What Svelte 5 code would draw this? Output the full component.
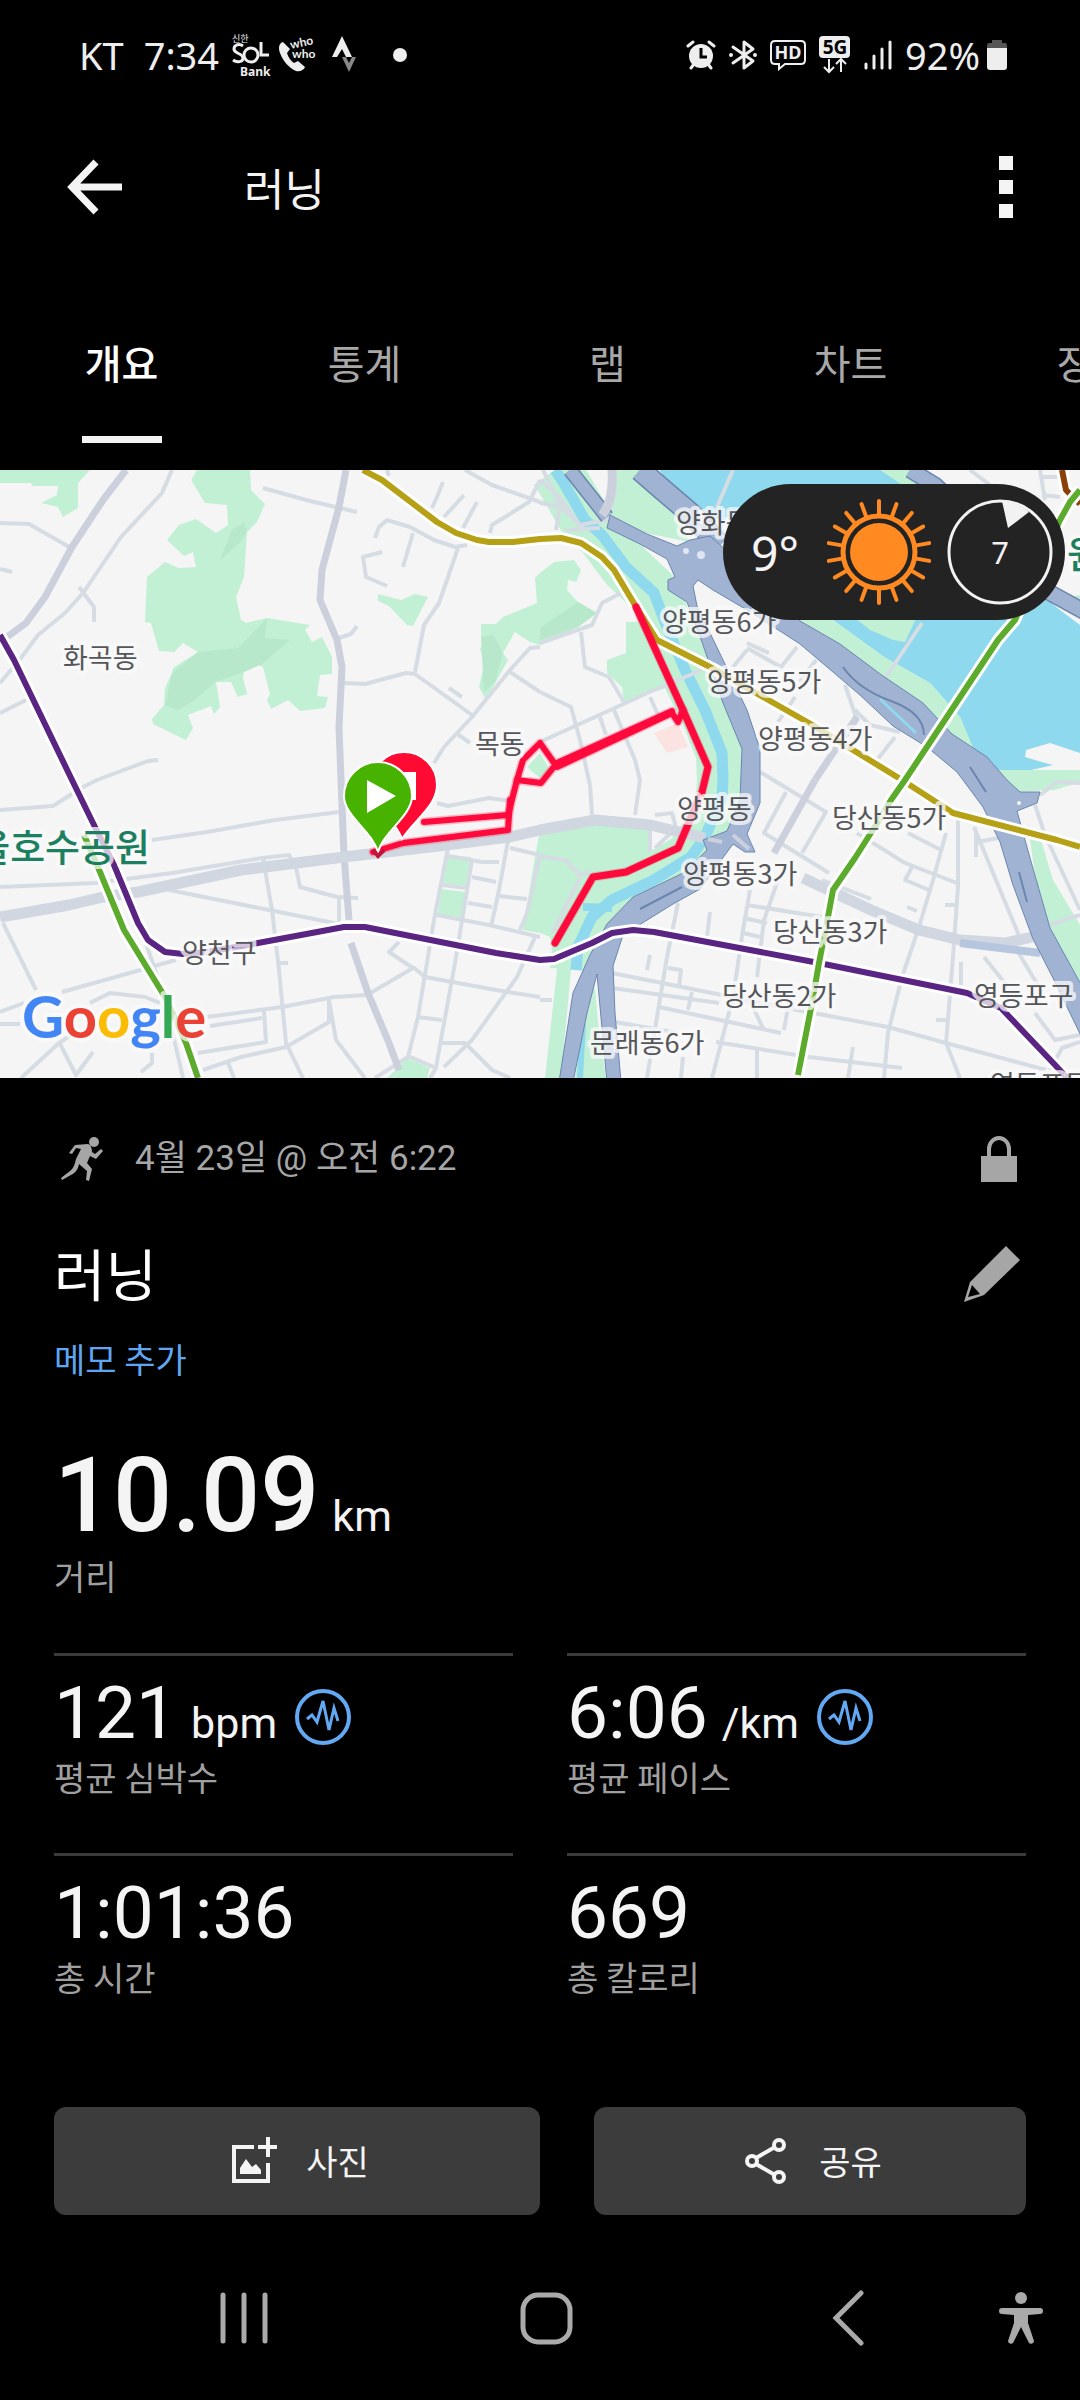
<script>
  const tabs = ['개요', '통계', '랩', '차트', '장비'];
  let active = $state(0);

  const stats = [
    { value: '121', unit: 'bpm', label: '평균 심박수', zone: true },
    { value: '6:06', unit: '/km', label: '평균 페이스', zone: true },
    { value: '1:01:36', unit: '', label: '총 시간', zone: false },
    { value: '669', unit: '', label: '총 칼로리', zone: false }
  ];

  const rays = Array.from({ length: 18 }, (_, i) => i * 20);

  const water = [
    '659,0 888,0 910,20 1060,140 1080,155 1080,283 1050,273 1026,280 1025,287 1045,293 1053,295 1018,303 1000,303 975,283 960,247 930,213 884,187 833,150 800,120 720,50 690,40'
  ];

  const parks = [
    '0,0 90,0 78,13 78,38 63,47 58,37 41,33 57,25 58,16 33,16 31,13 0,13',
    '197,0 250,0 251,20 265,34 257,52 247,62 244,107 236,127 241,150 246,153 267,148 310,155 305,160 312,172 322,167 332,187 332,204 320,205 317,226 328,227 325,238 300,241 288,230 271,239 267,230 270,224 263,197 258,195 244,202 243,208 247,224 238,227 231,212 216,212 220,237 214,244 211,236 188,245 193,258 186,270 153,254 152,249 164,235 165,218 172,203 173,198 198,182 183,173 174,182 159,181 151,153 145,152 147,107 165,92 179,98 196,97 193,82 184,86 167,70 179,55 196,49 216,63 228,55 227,35 205,33 191,10',
    '378,124 401,130 415,124 428,127 413,156 407,155 389,136 378,131',
    '540,103 535,108 537,133 503,147 496,154 481,154 481,167 486,172 480,178 484,195 479,217 486,230 508,190 503,183 515,162 530,172 540,175 578,157 597,143 578,132 567,120 568,110 576,112 581,100 574,90 554,92',
    '626,152 640,152 655,185 669,217 624,232 622,217 607,203 607,190 626,183',
    '540,360 595,352 649,357 650,380 678,378 692,370 682,397 626,423 588,427 574,463 571,500 561,608 545,608 557,500 550,467 540,463 523,460 535,387',
    '595,517 598,553 606,608 575,608 586,533',
    '448,385 471,387 467,416 443,413',
    '441,419 465,422 462,449 438,446',
    '408,588 430,598 427,608 387,608',
    '527,297 540,283 550,300 540,308',
    '616,0 640,0 675,40 690,72 630,60 612,40',
    '790,140 833,150 884,187 930,213 960,247 975,283 1000,303 1018,325 980,320 880,240',
    '998,300 1080,300 1080,312 1055,320 1012,322',
    '1028,355 1041,370 1053,410 1080,455 1080,520 1052,465 1035,405',
    '845,140 920,140 905,172 893,170 870,160',
    '880,0 910,0 935,20 910,20',
    '1050,130 1080,125 1080,140'
  ];

  const hills = [
    '198,182 238,178 267,148 265,168 290,170 262,194 244,202 215,212 195,230 178,240 165,235 172,203',
    '247,62 244,52 232,60 220,90 240,72',
    '597,143 578,132 540,158 540,170 578,157',
    '481,167 493,165 503,183 495,212 484,222'
  ];

  const arterials = [
    '126,0 103,30 72,77 45,127 26,153 7,167',
    '346,0 339,37 322,100 320,130 337,170 342,197 339,257 341,310 344,385 349,450',
    '351,473 368,523 389,573 399,600',
    '815,310 857,247',
    '774,383 815,310'
  ];

  const boulevards = [
    '0,447 69,435 103,427 138,422 241,400 344,387 430,377 510,367 540,360 595,350 650,355 705,368',
    '803,408 871,440 919,460 960,470 1005,473 1032,467'
  ];

  const streets = [
    '172,0 162,23 121,67 83,123 65,143 38,165 21,188 0,213',
    '0,53 29,54 71,78', '0,99 12,102', '79,117 94,137 94,152', '0,243 26,230',
    '263,18 310,31 357,42', '387,0 389,6', '465,0 492,15 540,32 557,37',
    '540,10 529,32 492,55 490,63', '443,12 437,27 432,38', '464,25 444,47', '477,32 463,58',
    '375,68 379,57 387,50 410,57 434,70 455,77 467,75', '413,63 403,97',
    '382,82 363,87 366,107 387,116', '458,78 439,133 424,155 415,202',
    '344,213 365,214 406,203 415,204 472,245', '339,168 351,164 357,156',
    '540,177 530,178 510,200 472,247 444,277 434,293', '510,202 540,222', '449,218 462,227',
    '456,263 470,273', '158,290 148,291 97,310 83,317 53,336 0,340',
    '339,342 275,350 207,362 152,370',
    '0,417 96,413 172,403 262,388 289,385 296,397 300,417 337,427 358,428',
    '263,388 272,440 279,500 286,573 303,608', '339,427 339,452', '169,420 269,440 344,455',
    '3,453 36,520', '145,470 165,530 183,608', '62,522 176,490', '279,493 288,493',
    '0,542 24,533', '0,554 20,554', '90,533 110,523 145,527 160,533',
    '207,547 282,537 334,527 367,525 413,498', '413,498 389,482 399,472',
    '413,497 425,507 496,520 540,527', '210,556 262,548', '264,541 266,572 198,583',
    '203,600 241,587 286,577 329,552 329,530 336,570 365,608', '227,590 234,608',
    '21,608 59,573 74,563', '59,572 76,605 93,582', '152,583 152,593 141,602',
    '448,378 434,450 418,547 408,587 375,608', '472,390 455,493 436,597',
    '510,360 499,420 491,457', '510,378 540,385', '448,386 482,392 499,392',
    '442,415 468,418', '472,407 496,412', '468,433 492,437', '499,426 527,429',
    '437,445 489,455 540,467', '540,385 527,443 520,460', '535,467 517,507 472,570 444,597',
    '442,573 465,573 492,600 510,608', '417,547 442,550', '408,586 436,598 430,608',
    '437,333 448,336 489,328 510,331',
    '540,173 592,155 602,133 623,122', '581,162 585,197 609,207 624,232',
    '540,272 595,247 654,220 702,200', '540,222 571,237 580,270 590,315 592,345',
    '600,247 606,265', '614,240 635,290 640,310 635,345', '650,227 659,247',
    '543,0 560,35 556,60', '540,33 560,36 580,55 607,50 615,20 610,0', '565,60 600,58',
    '540,10 560,28 583,60', '747,173 769,183', '747,178 781,197 797,177', '747,180 733,197',
    '795,227 778,252', '816,190 800,212', '895,267 877,290', '733,0 717,37', '922,153 884,210',
    '855,240 870,255 900,262', '845,215 857,250 850,262',
    '760,302 826,342 802,383', '786,322 764,363 829,403', '822,410 871,429',
    '857,363 905,393 957,413', '908,363 941,380',
    '946,363 933,410 919,457 902,507 888,563 884,608',
    '958,350 958,417 953,487 946,573 960,608', '912,397 905,410 929,420',
    '747,435 822,447', '750,420 743,460 733,527 712,608', '778,410 764,450 757,507',
    '748,527 764,560', '743,448 767,453', '743,463 760,467',
    '678,433 667,487 657,547 647,608', '710,442 707,467', '650,485 647,500', '668,498 681,500 679,517',
    '612,503 712,523 760,533 888,557 946,573 1046,600', '612,518 719,533', '659,537 781,563',
    '716,572 809,587 902,598', '615,552 678,563', '692,522 688,540', '757,577 757,608',
    '853,577 848,608', '788,537 784,560', '683,587 681,608', '974,357 1022,473', '976,363 976,387',
    '977,372 998,368', '984,487 1008,517', '1015,477 1039,517', '961,492 961,515', '936,550 950,550',
    '907,437 917,441', '945,435 957,435', '1080,445 1050,455', '1080,313 1057,312 1040,325',
    '1035,335 1045,365 1080,440', '970,0 990,15', '1040,0 1045,30', '1042,7 1058,7', '1042,25 1060,27',
    '1035,543 1055,570 1080,565', '1050,600 1062,578 1080,572', '655,345 672,343 676,358 655,378',
    '650,357 650,382', '540,386 565,390 580,405 590,402', '540,530 552,530', '580,408 553,462'
  ];

  const ramps = [
    { pts: '570,0 596,33 607,47', w: 12 },
    { pts: '640,0 663,20 690,43 720,75', w: 20 },
    { pts: '910,0 935,15 1045,120 1085,142', w: 14 }
  ];

  const expressway =
    '610,45 647,64 677,76 690,70 710,66 760,110 800,151 840,174 883,206 923,233 952,264 987,287 1007,310 1020,322 1040,322 1037,333 1017,341 1030,388 1040,423 1050,458 1084,520 1084,572 1053,508 1033,469 1013,415 1000,372 983,337 957,302 927,277 893,256 860,225 833,202 800,174 780,161 747,140 713,120 698,110 693,116 697,136 723,190 747,240 760,279 760,333 747,364 755,382 745,382 733,374 700,419 673,434 623,465 613,496 615,543 621,612 607,612 597,504 587,543 573,612 559,612 573,523 590,485 607,454 633,427 683,403 707,380 703,370 727,361 740,330 742,279 723,233 703,175 687,132 668,120 668,110 675,107 667,89 640,74 607,58';

  const stream =
    '555,0 562,10 585,50 602,65 626,97 654,123 667,157 685,200 705,240 722,283 723,310 722,327 705,367 691,387 654,410 612,430 592,447 578,477 576,500';

  const lines = [
    { color: '#8a4109', pts: '1062,0 1066,20 1080,34' },
    { color: '#b5a016', pts: '363,0 382,10 437,52 456,63 477,70 489,72 513,72 540,69 561,68 581,73 602,87 614,100 635,135 657,170 712,198 809,253 902,310 936,332 953,343 1057,370 1080,377' },
    { color: '#5dab2c', pts: '84,365 100,402 124,460 165,527 186,573 198,608' },
    { color: '#5a2582', pts: '0,165 14,190 72,310 93,353 114,395 138,453 148,470 165,482 183,484 207,482 258,473 344,457 365,457 496,483 540,490 554,489 592,473 612,463 633,460 654,462 819,493 967,523 1001,538 1057,597 1067,608' },
    { color: '#5dab2c', pts: '1080,20 1070,32 1060,50 1015,150 998,170 905,310 891,330 876,355 855,388 833,420 828,447 819,493 812,533 798,605' }
  ];

  const route = [
    '636,137 683,240 708,297 702,322 678,378 626,402 593,407 555,473',
    '683,240 678,252 672,243 557,297 540,273 523,290 517,310 541,313 557,293 672,241',
    '517,310 508,345 424,352',
    '510,330 508,360 403,373 373,382'
  ];

  const places = [
    { name: '화곡동', x: 63, y: 198 },
    { name: '목동', x: 475, y: 284 },
    { name: '양화동', x: 676, y: 63 },
    { name: '양평동6가', x: 662, y: 162 },
    { name: '양평동5가', x: 707, y: 222 },
    { name: '양평동4가', x: 758, y: 279 },
    { name: '양평동', x: 677, y: 349 },
    { name: '당산동5가', x: 832, y: 358 },
    { name: '양평동3가', x: 683, y: 414 },
    { name: '당산동3가', x: 773, y: 472 },
    { name: '당산동2가', x: 722, y: 536 },
    { name: '영등포구', x: 974, y: 536 },
    { name: '문래동6가', x: 590, y: 583 },
    { name: '영등포동', x: 990, y: 625 },
    { name: '양천구', x: 182, y: 493 }
  ];
</script>

<div class="screen">
  <div class="status">
    <div class="group">
      <span>KT</span>
      <span>7:34</span>
      <svg class="app-icon" width="42" height="48" viewBox="0 0 42 48">
        <text class="tiny ko" x="1" y="11">신한</text>
        <g fill="none" stroke="#eee" stroke-width="3">
          <path d="M12 15C8 12 3 14 3 18c0 5 9 4 9 9 0 4-6 5-10 2" />
          <circle cx="20" cy="24" r="7" />
          <path d="M30 11v13h8" />
        </g>
        <text class="tiny bold" x="9" y="45">Bank</text>
      </svg>
      <svg width="42" height="42" viewBox="0 0 42 42">
        <path d="M6 8c-4 1-5 6-3 11 3 8 9 15 16 18 4 1 8-1 9-4l-7-6-4 2c-3-2-6-6-7-10l3-4z" fill="#eee" />
        <text class="tiny who" x="14" y="15" transform="rotate(-12 14 15)">who</text>
        <text class="tiny who" x="15" y="24">who</text>
      </svg>
      <svg width="28" height="38" viewBox="0 0 28 38">
        <path d="M11 0l10 21h-6l-4-8-5 8H1z" fill="#eee" />
        <path d="M11 21h4l3 6 3-6h4l-7 15z" fill="#888" />
      </svg>
      <span class="dot"></span>
    </div>
    <div class="group right">
      <svg width="30" height="30" viewBox="0 0 30 30">
        <circle cx="15" cy="16" r="12" fill="#eee" />
        <path d="M2 6l5-4M28 6l-5-4M5 28l3-4M25 28l-3-4" stroke="#eee" stroke-width="3" stroke-linecap="round" />
        <path d="M15 8v9h6" fill="none" stroke="#000" stroke-width="3" />
      </svg>
      <svg width="28" height="32" viewBox="0 0 28 32">
        <path d="M4 8l20 14-9 7V3l9 7L4 24" fill="none" stroke="#eee" stroke-width="3" stroke-linejoin="round" stroke-linecap="round" />
        <circle cx="2" cy="16" r="2" fill="#eee" /><circle cx="26" cy="16" r="2" fill="#eee" />
      </svg>
      <svg width="36" height="32" viewBox="0 0 36 32">
        <path d="M5 2h26q4 0 4 4v15q0 4-4 4H15l-6 5v-5H5q-4 0-4-4V6q0-4 4-4z" fill="none" stroke="#eee" stroke-width="2" />
        <text class="hd" x="18" y="20" text-anchor="middle">HD</text>
      </svg>
      <svg width="32" height="38" viewBox="0 0 32 38">
        <rect width="31" height="22" rx="4" fill="#eee" />
        <text class="five" x="16" y="18" text-anchor="middle">5G</text>
        <path d="M10 23v12M5 31l5 5 5-5M22 36V24M17 28l5-5 5 5" fill="none" stroke="#eee" stroke-width="2" />
      </svg>
      <svg width="28" height="30" viewBox="0 0 28 30">
        <path d="M2 28v-4M10 28V16M18 28V9M26 28V2" stroke="#eee" stroke-width="3" stroke-linecap="round" />
      </svg>
      <span class="battery">
        92%
        <svg width="22" height="32" viewBox="0 0 22 32">
          <path d="M6 1h10v3h3q2 0 2 3v3H1V7q0-3 2-3h3z" fill="#555" />
          <path d="M1 9h20v19q0 3-3 3H4q-3 0-3-3z" fill="#eee" />
        </svg>
      </span>
    </div>
  </div>

  <header>
    <button class="icon" aria-label="뒤로">
      <svg width="56" height="56" viewBox="0 0 56 56">
        <path d="M29 3L5 28l24 25M6 28h49" fill="none" stroke="#f4f4f4" stroke-width="7" />
      </svg>
    </button>
    <h1>러닝</h1>
    <button class="icon" aria-label="더보기">
      <svg width="14" height="62" viewBox="0 0 14 62">
        <path d="M0 0h14v14H0zM0 24h14v14H0zM0 48h14v14H0z" fill="#f4f4f4" />
      </svg>
    </button>
  </header>

  <nav class="tabs">
    {#each tabs as tab, i}
      <button class:active={active === i} onclick={() => (active = i)}>{tab}</button>
    {/each}
  </nav>

  <section class="map">
    <svg class="canvas" viewBox="0 0 1080 608">
      <rect width="1080" height="608" fill="#f5f5f5" />
      {#each water as pts}<polygon points={pts} fill="#8ed9ed" />{/each}
      <polyline class="bank" points={stream} />
      {#each parks as pts}<polygon points={pts} fill="#c1f0d5" />{/each}
      {#each hills as pts}<polygon points={pts} fill="#b8e8cc" />{/each}
      <polygon points="693,112 747,140 800,174 833,202 860,225 893,256 900,290 765,290 747,240 723,190" fill="#f5f5f5" />
      <polygon points="760,333 747,364 755,390 700,425 625,468 613,500 617,560 780,560 780,333" fill="#f5f5f5" />
      <polygon points="654,263 678,253 688,277 667,283" fill="#fbe3e1" />
      <polyline points={stream} fill="none" stroke="#8ed9ed" stroke-width="11" />
      <polyline points="583,553 580,608" fill="none" stroke="#8ed9ed" stroke-width="6" />
      <polyline points="583,437 612,438" fill="none" stroke="#8ed9ed" stroke-width="8" />
      {#each streets as pts}<polyline class="street" points={pts} />{/each}
      {#each arterials as pts}<polyline class="arterial" points={pts} />{/each}
      {#each boulevards as pts}<polyline class="boulevard" points={pts} />{/each}
      <polyline points="960,473 1040,483" stroke="#b6c6de" stroke-width="8" fill="none" />
      {#each ramps as r}
        <polyline class="joined" points={r.pts} stroke="#6b86ae" stroke-width={r.w + 3} />
        <polyline class="joined" points={r.pts} stroke="#a1b3d3" stroke-width={r.w} />
      {/each}
      <polygon class="expressway" points={expressway} />
      <path d="M843 197q15 22 48 34t33 34M640 439l42-22M970 297l16 25M1019 402l8 30" fill="none" stroke="#6b86ae" stroke-width="2" />
      <path d="M880 229l36 34" stroke="#8ed9ed" stroke-width="3" />
      <path d="M708 369l14 3M733 365l16 14" stroke="#cbd0dc" stroke-width="4" />
      <circle cx="686" cy="81" r="3" fill="#dfe6f2" /><circle cx="701" cy="85" r="4" fill="#dfe6f2" />
      <circle cx="1027" cy="347" r="3" fill="#f5f5f5" /><circle cx="1019" cy="333" r="2" fill="#f5f5f5" />
      <path d="M612 0q2 30-10 45" fill="none" stroke="#cbd0dc" stroke-width="9" />

      {#each lines as l}
        <polyline class="joined" points={l.pts} stroke="#fff" stroke-width="12" />
        <polyline class="joined" points={l.pts} stroke={l.color} stroke-width="6" />
      {/each}

      {#each route as pts}<polyline class="halo" points={pts} />{/each}
      {#each route.slice(0, 1) as pts}<polyline class="route wide" points={pts} />{/each}
      {#each route.slice(1) as pts}<polyline class="route" points={pts} />{/each}

      {#each places as p}<text class="place" x={p.x} y={p.y}>{p.name}</text>{/each}
      <text class="park-name" x="150" y="391" text-anchor="end">서서울호수공원</text>
      <text class="park-name" x="1067" y="98">원</text>

      <path d="M402 369C396 350 371 336 371 315a33 33 0 0 1 66 0c0 21-23 35-35 54z" fill="#ff0a32" stroke="#fff" stroke-width="2" />
      <rect x="390" y="302" width="26" height="28" fill="#fff" />
      <path d="M378 382C372 361 344 346 344 326a34 34 0 0 1 68 0c0 20-28 35-34 56z" fill="#47b300" stroke="#fff" stroke-width="2" />
      <path d="M367 310l29 16-29 17z" fill="#fff" />
      <path d="M373 380l5 6 6-6" fill="none" stroke="#c01538" stroke-width="4" />

      <text class="google" x="22" y="568"><tspan fill="#4285f4">G</tspan><tspan fill="#ea4335">o</tspan><tspan fill="#fbbc05">o</tspan><tspan fill="#4285f4">g</tspan><tspan fill="#34a853">l</tspan><tspan fill="#ea4335">e</tspan></text>
    </svg>

    <div class="weather">
      <span class="temp">9°</span>
      <svg width="104" height="106" viewBox="-52 -53 104 106">
        {#each rays as a}
          <path d="M0-38V-51" transform="rotate({a})" stroke="#ff8a22" stroke-width="4" stroke-linecap="round" />
        {/each}
        <circle r="36" fill="none" stroke="#ff8a22" stroke-width="5" />
        <circle r="29" fill="#ff8a22" />
      </svg>
      <div class="wind">
        <svg width="106" height="106" viewBox="-53 -53 106 106">
          <circle r="51" fill="none" stroke="#f2f2f2" stroke-width="3" />
          <path d="M2-51Q18-50 29-40L8-24z" fill="#f2f2f2" />
          <text class="speed" y="12" text-anchor="middle">7</text>
        </svg>
      </div>
    </div>
  </section>

  <main>
    <div class="row meta">
      <svg width="46" height="48" viewBox="0 0 46 48" fill="#a6a6a6">
        <circle cx="35" cy="7" r="5" />
        <path d="M16 10l13-1c3 1 4 4 4 8l3 2 6-5 2 2-7 8-6-3-3 7 5 6-3 12-3-1 1-9-8-7c-1 6-4 9-8 11L3 45l-1-2 9-7c4-3 5-8 6-12l5-10-5-1-4 6-3-1z" />
      </svg>
      <span class="date">4월 23일 @ 오전 6:22</span>
      <svg class="end" width="46" height="48" viewBox="0 0 46 48">
        <path d="M13 22V14a10 11 0 0 1 20 0v8" fill="none" stroke="#a6a6a6" stroke-width="4" />
        <rect x="5" y="21" width="36" height="26" fill="#a6a6a6" />
      </svg>
    </div>

    <div class="row title">
      <h2>러닝</h2>
      <button class="icon end" aria-label="제목 편집">
        <svg width="64" height="60" viewBox="0 0 64 60" fill="#a6a6a6">
          <path fill-rule="evenodd" d="M44 2L58 16 22 51 2 58 8 38zM10 41L6 53 18 50z" />
        </svg>
      </button>
    </div>

    <a class="memo" href="#memo">메모 추가</a>

    <div class="distance"><span class="big">10.09</span><span class="unit">km</span></div>
    <div class="label">거리</div>

    <div class="stats">
      {#each stats as s}
        <div class="stat">
          <div class="value">
            <span>{s.value}</span>
            {#if s.unit}<span class="unit">{s.unit}</span>{/if}
            {#if s.zone}
              <button class="icon zone" aria-label="{s.label} 차트">
                <svg width="58" height="58" viewBox="0 0 58 58" fill="none" stroke="#62a8f3">
                  <circle cx="29" cy="29" r="26" stroke-width="4" />
                  <path d="M13 31l5-4 5 7 6-21 6 29 5-22 4 13" stroke-width="3" />
                </svg>
              </button>
            {/if}
          </div>
          <div class="label">{s.label}</div>
        </div>
      {/each}
    </div>

    <div class="actions">
      <button>
        <svg width="48" height="48" viewBox="0 0 48 48">
          <path d="M24 10H4v34h34V26" fill="none" stroke="#f4f4f4" stroke-width="4" />
          <path d="M38 0v20M28 10h19" stroke="#f4f4f4" stroke-width="4" />
          <path d="M10 37V31l6-9 6 8 4-3 5 6v4z" fill="#f4f4f4" />
        </svg>
        사진
      </button>
      <button>
        <svg width="48" height="48" viewBox="0 0 48 48" fill="none" stroke="#f4f4f4" stroke-width="4">
          <circle cx="36" cy="8" r="5" /><circle cx="9" cy="24" r="5" /><circle cx="36" cy="40" r="5" />
          <path d="M13 21l19-11M13 27l19 11" />
        </svg>
        공유
      </button>
    </div>
  </main>

  <footer>
    <button class="icon" aria-label="최근 앱">
      <svg width="52" height="54" viewBox="0 0 52 54">
        <path d="M5 4v46M26 4v46M47 4v46" stroke="#aaa" stroke-width="5" stroke-linecap="round" />
      </svg>
    </button>
    <button class="icon" aria-label="홈">
      <svg width="54" height="54" viewBox="0 0 54 54">
        <rect x="4" y="4" width="47" height="47" rx="15" fill="none" stroke="#aaa" stroke-width="5" />
      </svg>
    </button>
    <button class="icon" aria-label="이전">
      <svg width="32" height="56" viewBox="0 0 32 56">
        <path d="M29 3L4 28l25 25" fill="none" stroke="#aaa" stroke-width="5" stroke-linecap="round" />
      </svg>
    </button>
    <button class="icon start" aria-label="접근성">
      <svg width="44" height="54" viewBox="0 0 44 54" fill="#aaa">
        <circle cx="22" cy="7" r="6" />
        <path d="M3 17h38a3 3 0 0 1 0 6l-12 1v8l6 18a3 3 0 0 1-5 2l-8-16-8 16a3 3 0 0 1-5-2l6-18v-8L3 23a3 3 0 0 1 0-6z" />
      </svg>
    </button>
  </footer>
</div>

<style>
  :global(body) {
    background: #000;
  }
  .screen {
    background: #000;
    color: #f4f4f4;
    font-family: Roboto, 'Noto Sans CJK KR', sans-serif;
    overflow: hidden;
  }
  svg {
    display: block;
    flex: none;
  }
  button {
    background: none;
    border: 0;
    padding: 0;
    color: inherit;
    font: inherit;
    cursor: pointer;
  }
  .icon {
    display: flex;
    align-items: center;
    justify-content: center;
  }
  .end {
    margin-left: auto;
  }

  .status {
    display: flex;
    justify-content: space-between;
    align-items: center;
    height: 109px;
    padding: 0 72px 0 79px;
    font-family: 'Noto Sans', sans-serif;
    font-size: 38px;
    color: #eee;
  }
  .group {
    display: flex;
    align-items: center;
    gap: 12px;
  }
  .group span:first-child {
    margin-right: 8px;
  }
  .right {
    gap: 13px;
  }
  .app-icon {
    margin-right: -8px;
  }
  .battery {
    display: flex;
    align-items: center;
    gap: 6px;
  }
  .dot {
    width: 14px;
    height: 14px;
    margin-left: 22px;
    border-radius: 50%;
    background: #eee;
  }
  .tiny {
    font-size: 12px;
    fill: #eee;
  }
  .ko {
    font-family: 'Noto Sans CJK KR', sans-serif;
    font-size: 9px;
  }
  .bold {
    font-weight: 700;
  }
  .who {
    font-family: Lato, sans-serif;
    font-weight: 700;
  }
  .hd {
    font-size: 18px;
    font-weight: 700;
    fill: #eee;
  }
  .five {
    font-size: 19px;
    font-weight: 700;
    fill: #000;
  }

  header {
    display: flex;
    align-items: center;
    height: 155px;
    padding: 0 67px;
  }
  header h1 {
    flex: 1;
    margin: 0 0 0 121px;
    font-family: 'Noto Sans CJK KR', sans-serif;
    font-size: 44px;
    font-weight: 400;
    line-height: 60px;
  }

  .tabs {
    display: grid;
    grid-auto-flow: column;
    grid-auto-columns: 22.5%;
    overflow: hidden;
    padding-bottom: 27px;
  }
  .tabs button {
    justify-self: center;
    min-width: 80px;
    padding: 70px 0 46px;
    border-bottom: 7px solid transparent;
    color: #a8a8a8;
    font-family: 'Noto Sans CJK KR', sans-serif;
    font-size: 40px;
    line-height: 56px;
  }
  .tabs .active {
    border-color: #f4f4f4;
    color: #fff;
    font-weight: 500;
  }

  .map {
    position: relative;
  }
  .canvas {
    width: 100%;
    height: auto;
  }
  .street {
    fill: none;
    stroke: #d6dce3;
    stroke-width: 4;
    stroke-linejoin: round;
  }
  .arterial {
    fill: none;
    stroke: #cbd0dc;
    stroke-width: 7;
    stroke-linejoin: round;
  }
  .boulevard {
    fill: none;
    stroke: #d0d7e0;
    stroke-width: 11;
    stroke-linejoin: round;
  }
  .expressway {
    fill: #a1b3d3;
    stroke: #6b86ae;
    stroke-width: 1px;
    stroke-linejoin: round;
  }
  .bank {
    fill: none;
    stroke: #c1f0d5;
    stroke-width: 52;
    stroke-linejoin: round;
  }
  .joined {
    fill: none;
    stroke-linejoin: round;
  }
  .halo {
    fill: none;
    stroke: #ff0a3c;
    stroke-opacity: 0.25;
    stroke-width: 9;
    stroke-linejoin: round;
    stroke-linecap: round;
  }
  .route {
    fill: none;
    stroke: #ff0a3c;
    stroke-width: 6;
    stroke-linejoin: round;
    stroke-linecap: round;
  }
  .wide {
    stroke-width: 7;
  }
  .place,
  .park-name,
  .google {
    font-family: 'Noto Sans CJK KR', sans-serif;
    font-size: 27px;
    fill: #55565a;
    stroke: rgba(250, 250, 250, 0.75);
    stroke-width: 8px;
    stroke-linejoin: round;
    paint-order: stroke;
  }
  .park-name {
    font-size: 38px;
    font-weight: 500;
    fill: #1c8060;
  }
  .google {
    font-family: Lato, sans-serif;
    font-size: 58px;
    font-weight: 700;
  }
  .weather {
    position: absolute;
    top: 14px;
    right: 15px;
    display: flex;
    align-items: center;
    gap: 16px;
    height: 136px;
    padding: 0 12px 0 28px;
    border-radius: 68px;
    background: #232323;
    font-family: 'Noto Sans', sans-serif;
  }
  .temp {
    width: 60px;
    font-size: 48px;
  }
  .speed {
    font-size: 31px;
    fill: #f2f2f2;
  }

  main {
    padding: 57px 54px 0;
  }
  .row {
    display: flex;
    align-items: center;
  }
  .meta {
    height: 48px;
    padding-left: 5px;
    padding-right: 4px;
    color: #a6a6a6;
    font-size: 35px;
  }
  .date {
    margin-left: 30px;
    line-height: 40px;
  }
  .title {
    height: 64px;
    margin-top: 59px;
  }
  .title h2 {
    margin: 0;
    font-family: 'Noto Sans CJK KR', sans-serif;
    font-size: 56px;
    font-weight: 400;
    line-height: 64px;
    padding-bottom: 4px;
    color: #fff;
  }
  .memo {
    display: block;
    margin-top: 29px;
    color: #5fa6f2;
    font-family: 'Noto Sans CJK KR', sans-serif;
    font-size: 34px;
    line-height: 48px;
    text-decoration: none;
  }
  .distance {
    display: flex;
    align-items: baseline;
    gap: 13px;
    margin-top: 53px;
    line-height: 120px;
  }
  .big {
    font-size: 104px;
    font-weight: 500;
  }
  .unit {
    font-size: 43px;
    line-height: 48px;
  }
  .label {
    color: #a0a0a0;
    font-family: 'Noto Sans CJK KR', sans-serif;
    font-size: 34px;
    line-height: 40px;
  }
  .stats {
    display: grid;
    grid-template-columns: 1fr 1fr;
    gap: 56px 54px;
    margin-top: 57px;
  }
  .stat {
    padding-top: 15px;
    border-top: 3px solid #3a3a3a;
  }
  .value {
    display: flex;
    align-items: baseline;
    gap: 14px;
    height: 86px;
    font-size: 73px;
    line-height: 84px;
  }
  .zone {
    align-self: center;
    padding: 6px 0 0 3px;
  }
  .actions {
    display: grid;
    grid-template-columns: 9fr 8fr;
    gap: 54px;
    margin-top: 110px;
  }
  .actions button {
    display: flex;
    align-items: center;
    justify-content: center;
    gap: 28px;
    height: 108px;
    padding-left: 5px;
    border-radius: 12px;
    background: #3c3c3c;
    font-family: 'Noto Sans CJK KR', sans-serif;
    font-size: 34px;
    line-height: 40px;
  }

  footer {
    display: grid;
    grid-template-columns: 302fr 302fr 302fr 81fr;
    align-items: center;
    height: 164px;
    margin-top: 21px;
    padding-left: 93px;
  }
  .start {
    justify-content: flex-start;
  }
</style>
